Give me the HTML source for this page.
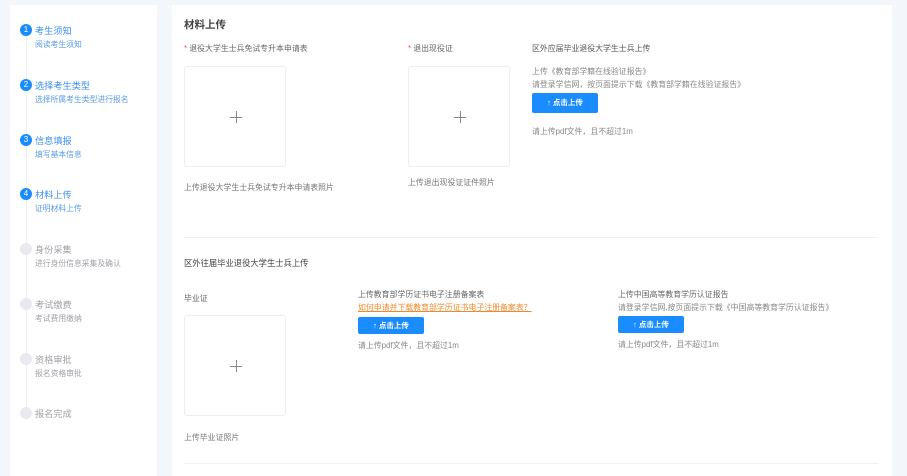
<!DOCTYPE html>
<html><head><meta charset="utf-8"><style>
*{margin:0;padding:0;box-sizing:border-box}
body{width:907px;height:476px;background:#f3f6fb;font-family:"Liberation Sans","Noto Sans CJK SC",sans-serif;position:relative;overflow:hidden;color:#666}
.abs{position:absolute;white-space:nowrap}
.side{position:absolute;left:10px;top:5px;width:147px;height:471px;background:#fff}
.main{position:absolute;left:172px;top:5px;width:720px;height:471px;background:#fff}
.vline{position:absolute;left:26px;top:30px;width:1px;height:390px;background:#eceef2}
.dot{position:absolute;left:20px;width:12px;height:12px;border-radius:50%;background:#1a8cff;color:#fff;font-size:8px;line-height:12px;text-align:center}
.dot.g{background:#e8eaef;color:#e8eaef}
.st{position:absolute;left:35px;font-size:9.2px;color:#3a8ef0;white-space:nowrap}
.ss{position:absolute;left:35px;font-size:7.8px;color:#5a9be6;white-space:nowrap}
.st.g{color:#a0a0a8}.ss.g{color:#a0a0a8}
.t{font-size:7.9px;color:#666}
.box{position:absolute;width:102px;height:101px;border:1px solid #eee;border-radius:3px;background:#fff}
.box:before{content:"";position:absolute;left:45px;top:50px;width:12px;height:1px;background:#888}
.box:after{content:"";position:absolute;left:51px;top:44px;width:1px;height:12px;background:#888}
.btn{position:absolute;background:#1a8cff;color:#fff;font-size:7.5px;font-weight:bold;text-align:center;border-radius:2px}
.hr{position:absolute;left:184px;width:694px;height:1px;background:#eef0f3}
</style></head><body>
<div class="side"></div>
<div class="main"></div>
<div class="vline"></div>
<div class="dot" style="top:24px">1</div><div class="st" style="top:23px">考生须知</div><div class="ss" style="top:39px">阅读考生须知</div>
<div class="dot" style="top:79px">2</div><div class="st" style="top:78px">选择考生类型</div><div class="ss" style="top:94px">选择所属考生类型进行报名</div>
<div class="dot" style="top:134px">3</div><div class="st" style="top:133px">信息填报</div><div class="ss" style="top:149px">填写基本信息</div>
<div class="dot" style="top:188px">4</div><div class="st" style="top:187px">材料上传</div><div class="ss" style="top:203px">证明材料上传</div>
<div class="dot g" style="top:243px">5</div><div class="st g" style="top:242px">身份采集</div><div class="ss g" style="top:258px">进行身份信息采集及确认</div>
<div class="dot g" style="top:298px">6</div><div class="st g" style="top:297px">考试缴费</div><div class="ss g" style="top:313px">考试费用缴纳</div>
<div class="dot g" style="top:353px">7</div><div class="st g" style="top:352px">资格审批</div><div class="ss g" style="top:368px">报名资格审批</div>
<div class="dot g" style="top:407px">8</div><div class="st g" style="top:406px">报名完成</div>

<div class="abs" style="left:184px;top:17px;font-size:10.5px;font-weight:bold;color:#444">材料上传</div>
<div class="abs t" style="left:184px;top:43px"><span style="color:#f55">*</span> 退役大学生士兵免试专升本申请表</div>
<div class="box" style="left:184px;top:66px"></div>
<div class="abs t" style="left:184px;top:182px;color:#777">上传退役大学生士兵免试专升本申请表照片</div>
<div class="abs t" style="left:408px;top:43px"><span style="color:#f55">*</span> 退出现役证</div>
<div class="box" style="left:408px;top:66px"></div>
<div class="abs t" style="left:408px;top:177px;color:#777">上传退出现役证证件照片</div>
<div class="abs t" style="left:532px;top:43px;color:#555">区外应届毕业退役大学生士兵上传</div>
<div class="abs t" style="left:532px;top:66px;color:#888">上传《教育部学籍在线验证报告》</div>
<div class="abs t" style="left:532px;top:79px;color:#888">请登录学信网，按页面提示下载《教育部学籍在线验证报告》</div>
<div class="btn" style="left:532px;top:93px;width:66px;height:20px;line-height:20px">↑ 点击上传</div>
<div class="abs t" style="left:532px;top:126px;color:#888">请上传pdf文件，且不超过1m</div>
<div class="hr" style="top:237px"></div>
<div class="abs" style="left:184px;top:257px;font-size:8.3px;color:#444">区外往届毕业退役大学生士兵上传</div>
<div class="abs t" style="left:184px;top:293px">毕业证</div>
<div class="box" style="left:184px;top:315px"></div>
<div class="abs t" style="left:184px;top:432px;color:#777">上传毕业证照片</div>
<div class="abs t" style="left:358px;top:289px">上传教育部学历证书电子注册备案表</div>
<div class="abs t" style="left:358px;top:302px;color:#f08a2c;text-decoration:underline">如何申请并下载教育部学历证书电子注册备案表？</div>
<div class="btn" style="left:358px;top:317px;width:66px;height:17px;line-height:17px">↑ 点击上传</div>
<div class="abs t" style="left:358px;top:340px;color:#888">请上传pdf文件，且不超过1m</div>
<div class="abs t" style="left:618px;top:289px">上传中国高等教育学历认证报告</div>
<div class="abs t" style="left:618px;top:302px;color:#888">请登录学信网,按页面提示下载《中国高等教育学历认证报告》</div>
<div class="btn" style="left:618px;top:316px;width:66px;height:17px;line-height:17px">↑ 点击上传</div>
<div class="abs t" style="left:618px;top:339px;color:#888">请上传pdf文件，且不超过1m</div>
<div class="hr" style="top:463px"></div>
</body></html>
